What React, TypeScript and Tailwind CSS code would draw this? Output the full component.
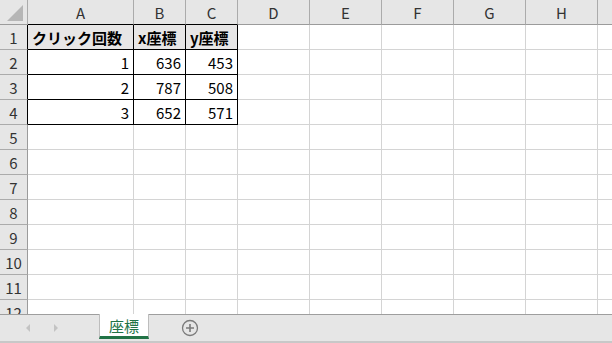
import React from "react";

const COLS = [
  { key: "A", w: "w-[106px]" },
  { key: "B", w: "w-[52px]" },
  { key: "C", w: "w-[52px]" },
  { key: "D", w: "w-[72px]" },
  { key: "E", w: "w-[72px]" },
  { key: "F", w: "w-[72px]" },
  { key: "G", w: "w-[72px]" },
  { key: "H", w: "w-[72px]" },
  { key: "", w: "w-[72px]" },
];

const DATA: (string | number)[][] = [
  ["クリック回数", "x座標", "y座標"],
  [1, 636, 453],
  [2, 787, 508],
  [3, 652, 571],
];

const ROW_COUNT = 12;

export default function App() {
  return (
    <div
      className="flex h-[343px] w-[612px] flex-col overflow-hidden bg-white text-[15px] text-black"
      style={{ fontFamily: '"Noto Sans CJK JP", "Noto Sans", sans-serif' }}
    >
      <div className="flex-1 overflow-hidden">
        <HeaderRow />
        {Array.from({ length: ROW_COUNT }, (_, i) => (
          <Row key={i} index={i} />
        ))}
      </div>
      <SheetTabs />
    </div>
  );
}

function HeaderRow() {
  return (
    <div className="flex h-[25px] bg-[#e6e6e6]">
      <div className="relative h-[25px] w-[28px] shrink-0 border-r border-b border-r-[#ababab] border-b-[#9b9b9b]">
        <svg width="18" height="18" viewBox="0 0 18 18" className="absolute right-[3px] bottom-[2px]" aria-hidden="true">
          <path d="M17 1 L17 17 L1 17 Z" fill="#b6b6b6" />
        </svg>
      </div>
      {COLS.map((c, i) => (
        <div
          key={i}
          className={`${c.w} flex h-[25px] shrink-0 items-center justify-center border-r border-b border-r-[#ababab] text-[15px] leading-none text-[#333] ${
            i < 3 ? "border-b-black" : "border-b-[#9b9b9b]"
          }`}
        >
          <span className="pt-[1px]">{c.key}</span>
        </div>
      ))}
    </div>
  );
}

function Row({ index }: { index: number }) {
  const inTable = index < DATA.length;
  return (
    <div className="flex h-[25px]">
      <div
        className={`flex h-[25px] w-[28px] shrink-0 items-center justify-center border-r border-b border-b-[#ababab] bg-[#e6e6e6] text-[15px] leading-none text-[#333] ${
          inTable ? "border-r-black" : "border-r-[#9b9b9b]"
        }`}
      >
        {index + 1}
      </div>
      {COLS.map((c, ci) => {
        const tableCell = inTable && ci < 3;
        const cell = tableCell ? DATA[index][ci] : null;
        const header = index === 0 && ci < 3;
        return (
          <div
            key={ci}
            className={`${c.w} flex h-[25px] shrink-0 items-center border-r border-b px-[4px] leading-none ${
              tableCell ? "border-r-black border-b-black" : "border-r-[#d4d4d4] border-b-[#d4d4d4]"
            } ${header ? "justify-start bg-[#e7e6e6] font-bold" : "justify-end"}`}
          >
            {cell}
          </div>
        );
      })}
    </div>
  );
}

function SheetTabs() {
  return (
    <div className="flex h-[29px] shrink-0 border-t border-b-2 border-t-[#9e9e9e] border-b-[#c8c8c8] bg-[#e6e6e6]">
      <div className="flex w-[99px] items-center gap-[20px] pl-[24px]">
        <svg width="8" height="10" viewBox="0 0 8 10" aria-hidden="true">
          <path d="M6 1 L2 5 L6 9 Z" fill="#c3c3c3" />
        </svg>
        <svg width="8" height="10" viewBox="0 0 8 10" aria-hidden="true">
          <path d="M2 1 L6 5 L2 9 Z" fill="#c3c3c3" />
        </svg>
      </div>
      <div className="-mt-px flex h-[25px] w-[50px] items-center justify-center border-x border-b-[3px] border-x-[#bdbdbd] border-b-[#217346] bg-white text-[15px] leading-none text-[#217346]">
        座標
      </div>
      <div className="flex w-[82px] items-center justify-center pb-[1px]">
        <svg width="18" height="18" viewBox="0 0 18 18" aria-hidden="true">
          <circle cx="9" cy="9" r="7.5" fill="none" stroke="#7b7b7b" strokeWidth="1.3" />
          <path d="M9 5 V13 M5 9 H13" stroke="#7b7b7b" strokeWidth="1.6" />
        </svg>
      </div>
    </div>
  );
}
